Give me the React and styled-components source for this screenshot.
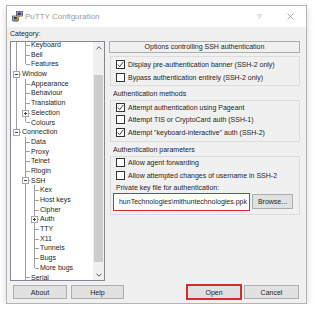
import React from 'react';
import styled, { createGlobalStyle } from 'styled-components';

const GlobalStyle = createGlobalStyle`
  html, body {
    margin: 0;
    padding: 0;
    background: #fff;
  }
  body {
    font-family: "Liberation Sans", Arial, sans-serif;
    font-size: 7px;
    color: #1e1e1e;
  }
  * { box-sizing: border-box; }
`;

const Window = styled.div`
  margin: 5px 0 0 6px;
  width: 301px;
  height: 299px;
  border: 1px solid #b4b4b4;
  box-shadow: 0 3px 7px rgba(0, 0, 0, 0.16);
  display: flex;
  flex-direction: column;
  background: #f0f0f0;
`;

const TitleBar = styled.div`
  height: 21px;
  flex: none;
  background: #fff;
  display: flex;
  align-items: center;
  padding-left: 5px;
`;

const TitleText = styled.span`
  margin-left: 2px;
  font-size: 8px;
  color: #9a9a9a;
`;

const Spacer = styled.div`
  flex: 1;
`;

const Control = styled.div`
  width: ${p => p.$w}px;
  height: 100%;
  display: flex;
  align-items: center;
  justify-content: center;
  color: #a8a8a8;
  font-size: 8px;
`;

const Body = styled.div`
  flex: 1;
  display: flex;
  flex-direction: column;
  padding: 0 6px 4px 3px;
`;

const Main = styled.div`
  height: 254px;
  display: grid;
  grid-template-columns: 95px 191px;
  column-gap: 4px;
`;

const LeftCol = styled.div`
  display: flex;
  flex-direction: column;
`;

const CategoryLabel = styled.div`
  height: 14px;
  line-height: 14px;
`;

const Tree = styled.div`
  height: 240px;
  border: 1px solid #828790;
  background: #fff;
  display: flex;
  overflow: hidden;
`;

const TreeList = styled.div`
  flex: 1;
  overflow: hidden;
  padding-left: 1px;
  margin-top: -2px;
`;

const Row = styled.div`
  height: 9.7px;
  display: flex;
  align-items: stretch;
  white-space: nowrap;
`;

const Indent = styled.div`
  position: relative;
  width: 9px;
  flex: none;

  &::before {
    content: '';
    display: ${p => (p.$v === 'none' ? 'none' : 'block')};
    position: absolute;
    left: 4px;
    top: 0;
    width: 1px;
    height: ${p => (p.$v === 'half' ? '50%' : '100%')};
    background: #a0a0a0;
  }

  &::after {
    content: '';
    display: ${p => (p.$elbow ? 'block' : 'none')};
    position: absolute;
    left: 5px;
    top: 50%;
    width: 4px;
    height: 1px;
    background: #a0a0a0;
  }
`;

const Expander = styled.div`
  position: absolute;
  left: 1px;
  top: calc(50% - 3px);
  width: 7px;
  height: 7px;
  border: 1px solid #a5a5a5;
  background: #fff;
  z-index: 1;

  &::before {
    content: '';
    position: absolute;
    left: 1px;
    top: 2px;
    width: 3px;
    height: 1px;
    background: #444;
  }

  &::after {
    content: '';
    display: ${p => (p.$open ? 'none' : 'block')};
    position: absolute;
    left: 2px;
    top: 1px;
    width: 1px;
    height: 3px;
    background: #444;
  }
`;

const Label = styled.span`
  padding-left: 1px;
  line-height: 9.7px;
`;

const ScrollBar = styled.div`
  width: 11px;
  flex: none;
  background: #f0f0f0;
  display: flex;
  flex-direction: column;
`;

const ArrowBtn = styled.div`
  height: 11px;
  display: flex;
  align-items: center;
  justify-content: center;
`;

const Track = styled.div`
  flex: 1;
  padding: 22px 1px 0;
`;

const Thumb = styled.div`
  height: 187px;
  background: #cdcdcd;
`;

const RightCol = styled.div`
  padding-top: 14px;
  display: flex;
  flex-direction: column;
`;

const HeaderBox = styled.div`
  height: 12px;
  border: 1px solid #adadad;
  text-align: center;
  line-height: 10px;
`;

const Group = styled.div`
  margin: ${p => p.$mt}px 0 0 1px;
  border: 1px solid #dcdcdc;
  padding: ${p => p.$pt}px 0 ${p => p.$pb}px 5px;
  display: flex;
  flex-direction: column;
`;

const Caption = styled.div`
  margin-top: 2px;
  height: 12px;
  line-height: 12px;
  padding-left: 4px;
`;

const CheckRow = styled.div`
  height: ${p => p.$h}px;
  display: flex;
  align-items: center;
  gap: 3px;
  white-space: nowrap;
`;

const Box = styled.div`
  width: 9px;
  height: 9px;
  border: 1px solid #333;
  background: #fff;
  display: flex;
  align-items: center;
  justify-content: center;
  flex: none;
`;

const FieldLabel = styled.div`
  height: 11px;
  line-height: 11px;
`;

const KeyRow = styled.div`
  height: 18px;
  display: flex;
  align-items: center;
  margin-left: -3px;
`;

const RedFrame = styled.div`
  width: 137px;
  height: 18px;
  border: 1.5px solid #d62b2b;
  background: #fff;
  display: flex;
  justify-content: flex-end;
  align-items: center;
  overflow: hidden;
  white-space: nowrap;
  padding-right: 2px;
`;

const Button = styled.div`
  width: ${p => p.$w}px;
  height: ${p => p.$h || 14}px;
  flex: none;
  background: #e1e1e1;
  border: 1px solid ${p => (p.$hl ? '#d62b2b' : '#adadad')};
  box-shadow: ${p => (p.$hl ? '0 0 0 1px #d62b2b' : 'none')};
  display: flex;
  align-items: center;
  justify-content: center;
  margin-left: ${p => p.$ml || 0}px;
`;

const ButtonRow = styled.div`
  margin-top: 4px;
  height: 14px;
  display: flex;
  padding: 0 1px 0 3px;
`;

const TREE = [
  { label: 'Keyboard', anc: [true], last: false },
  { label: 'Bell', anc: [true], last: false },
  { label: 'Features', anc: [true], last: true },
  { label: 'Window', anc: [], last: false, exp: 'open' },
  { label: 'Appearance', anc: [true], last: false },
  { label: 'Behaviour', anc: [true], last: false },
  { label: 'Translation', anc: [true], last: false },
  { label: 'Selection', anc: [true], last: false, exp: 'closed' },
  { label: 'Colours', anc: [true], last: true },
  { label: 'Connection', anc: [], last: true, exp: 'open' },
  { label: 'Data', anc: [false], last: false },
  { label: 'Proxy', anc: [false], last: false },
  { label: 'Telnet', anc: [false], last: false },
  { label: 'Rlogin', anc: [false], last: false },
  { label: 'SSH', anc: [false], last: false, exp: 'open' },
  { label: 'Kex', anc: [false, true], last: false },
  { label: 'Host keys', anc: [false, true], last: false },
  { label: 'Cipher', anc: [false, true], last: false },
  { label: 'Auth', anc: [false, true], last: false, exp: 'closed' },
  { label: 'TTY', anc: [false, true], last: false },
  { label: 'X11', anc: [false, true], last: false },
  { label: 'Tunnels', anc: [false, true], last: false },
  { label: 'Bugs', anc: [false, true], last: false },
  { label: 'More bugs', anc: [false, true], last: true },
  { label: 'Serial', anc: [false], last: false },
];

const PuttyIcon = () => (
  <svg width="11" height="11" viewBox="0 0 11 11">
    <rect x="4.5" y="0.5" width="6" height="4.5" fill="#d8d8d8" stroke="#555" strokeWidth="0.8" />
    <rect x="5.5" y="1.4" width="4" height="2.6" fill="#2b3f8c" />
    <rect x="0.5" y="5" width="6" height="4.5" fill="#d8d8d8" stroke="#555" strokeWidth="0.8" />
    <rect x="1.5" y="5.9" width="4" height="2.6" fill="#2b3f8c" />
    <rect x="1" y="9.6" width="5" height="1.2" fill="#8a8a8a" />
    <path d="M7.2 4.2 L4.2 6.8 L5.8 6.8 L3.6 9.8 L7.8 6 L6.2 6 L8.4 4.2 Z" fill="#f2d21b" stroke="#8a6d00" strokeWidth="0.3" />
  </svg>
);

const CloseIcon = () => (
  <svg width="7" height="7" viewBox="0 0 7 7">
    <path d="M0.5 0.5 L6.5 6.5 M6.5 0.5 L0.5 6.5" stroke="#9a9a9a" strokeWidth="0.8" />
  </svg>
);

const Chevron = ({ down }) => (
  <svg width="6" height="4" viewBox="0 0 6 4">
    <path d={down ? 'M0.6 0.8 L3 3.2 L5.4 0.8' : 'M0.6 3.2 L3 0.8 L5.4 3.2'} fill="none" stroke="#555" strokeWidth="1" />
  </svg>
);

const Check = () => (
  <svg width="7" height="7" viewBox="0 0 7 7">
    <path d="M0.8 3.6 L2.7 5.6 L6.3 0.9" fill="none" stroke="#222" strokeWidth="0.9" />
  </svg>
);

const TreeRow = ({ node }) => {
  const level = node.anc.length;
  return (
    <Row>
      {node.anc.map((on, i) => (
        <Indent key={i} $v={on ? 'full' : 'none'} />
      ))}
      <Indent $v={node.last ? 'half' : 'full'} $elbow>
        {node.exp && <Expander $open={node.exp === 'open'} />}
      </Indent>
      <Label data-level={level}>{node.label}</Label>
    </Row>
  );
};

const CheckItem = ({ checked, h, children }) => (
  <CheckRow $h={h}>
    <Box>{checked && <Check />}</Box>
    <span>{children}</span>
  </CheckRow>
);

export default function App() {
  return (
    <>
      <GlobalStyle />
      <Window>
        <TitleBar>
          <PuttyIcon />
          <TitleText>PuTTY Configuration</TitleText>
          <Spacer />
          <Control $w={30}>?</Control>
          <Control $w={32}><CloseIcon /></Control>
        </TitleBar>
        <Body>
          <Main>
            <LeftCol>
              <CategoryLabel>Category:</CategoryLabel>
              <Tree>
                <TreeList>
                  {TREE.map(node => (
                    <TreeRow key={node.label} node={node} />
                  ))}
                </TreeList>
                <ScrollBar>
                  <ArrowBtn><Chevron /></ArrowBtn>
                  <Track><Thumb /></Track>
                  <ArrowBtn><Chevron down /></ArrowBtn>
                </ScrollBar>
              </Tree>
            </LeftCol>
            <RightCol>
              <HeaderBox>Options controlling SSH authentication</HeaderBox>
              <Group $mt={3} $pt={1} $pb={1}>
                <CheckItem h={13} checked>Display pre-authentication banner (SSH-2 only)</CheckItem>
                <CheckItem h={13}>Bypass authentication entirely (SSH-2 only)</CheckItem>
              </Group>
              <Caption>Authentication methods</Caption>
              <Group $mt={0} $pt={0} $pb={2}>
                <CheckItem h={12.5} checked>Attempt authentication using Pageant</CheckItem>
                <CheckItem h={12.5}>Attempt TIS or CryptoCard auth (SSH-1)</CheckItem>
                <CheckItem h={12.5} checked>Attempt "keyboard-interactive" auth (SSH-2)</CheckItem>
              </Group>
              <Caption>Authentication parameters</Caption>
              <Group $mt={0} $pt={0} $pb={3}>
                <CheckItem h={12.5}>Allow agent forwarding</CheckItem>
                <CheckItem h={12.5}>Allow attempted changes of username in SSH-2</CheckItem>
                <FieldLabel>Private key file for authentication:</FieldLabel>
                <KeyRow>
                  <RedFrame>hunTechnologies\mithuntechnologies.ppk</RedFrame>
                  <Button $w={41} $h={15} $ml={2}>Browse...</Button>
                </KeyRow>
              </Group>
            </RightCol>
          </Main>
          <ButtonRow>
            <Button $w={54}>About</Button>
            <Button $w={53} $ml={4}>Help</Button>
            <Spacer />
            <Button $w={54} $hl>Open</Button>
            <Button $w={55} $ml={3}>Cancel</Button>
          </ButtonRow>
        </Body>
      </Window>
    </>
  );
}
